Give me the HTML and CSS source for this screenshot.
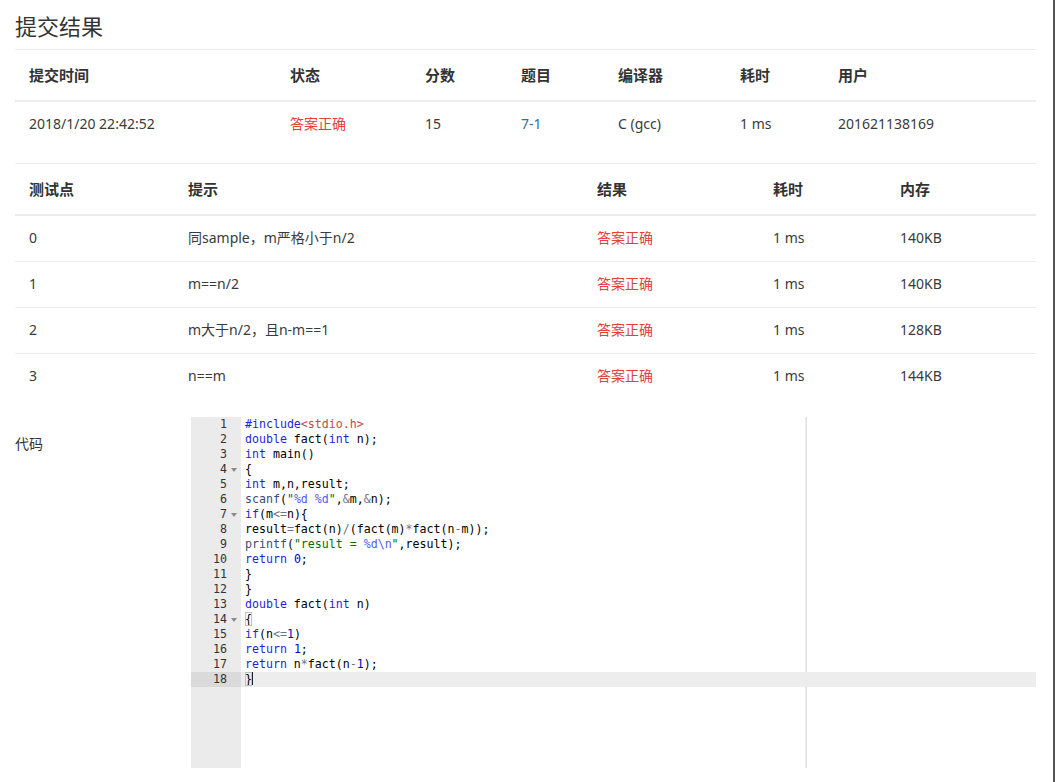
FILE: index.html
```html
<!DOCTYPE html>
<html lang="zh-CN">
<head>
<meta charset="utf-8">
<title>提交结果</title>
<link rel="stylesheet" href="styles.css">
</head>
<body>
<div class="page">
  <h1 class="title">提交结果</h1>

  <table class="tbl tbl-summary">
    <colgroup>
      <col class="c-time"><col class="c-status"><col class="c-score"><col class="c-prob"><col class="c-comp"><col class="c-cost"><col class="c-user">
    </colgroup>
    <thead>
      <tr><th>提交时间</th><th>状态</th><th>分数</th><th>题目</th><th>编译器</th><th>耗时</th><th>用户</th></tr>
    </thead>
    <tbody>
      <tr>
        <td>2018/1/20 22:42:52</td>
        <td class="ok">答案正确</td>
        <td>15</td>
        <td><a class="link" href="#">7-1</a></td>
        <td>C (gcc)</td>
        <td>1 ms</td>
        <td>201621138169</td>
      </tr>
    </tbody>
  </table>

  <table class="tbl tbl-cases">
    <colgroup>
      <col class="k-id"><col class="k-hint"><col class="k-res"><col class="k-time"><col class="k-mem">
    </colgroup>
    <thead>
      <tr><th>测试点</th><th>提示</th><th>结果</th><th>耗时</th><th>内存</th></tr>
    </thead>
    <tbody>
      <tr><td>0</td><td>同sample，m严格小于n/2</td><td class="ok">答案正确</td><td>1 ms</td><td>140KB</td></tr>
      <tr><td>1</td><td>m==n/2</td><td class="ok">答案正确</td><td>1 ms</td><td>140KB</td></tr>
      <tr><td>2</td><td>m大于n/2，且n-m==1</td><td class="ok">答案正确</td><td>1 ms</td><td>128KB</td></tr>
      <tr><td>3</td><td>n==m</td><td class="ok">答案正确</td><td>1 ms</td><td>144KB</td></tr>
    </tbody>
  </table>

  <div class="code-section">
    <div class="code-label">代码</div>
    <div class="editor">
      <div class="gutter">
        <div class="g-cell"><span class="num">1</span><span class="fold"></span></div>
        <div class="g-cell"><span class="num">2</span><span class="fold"></span></div>
        <div class="g-cell"><span class="num">3</span><span class="fold"></span></div>
        <div class="g-cell"><span class="num">4</span><span class="fold open"></span></div>
        <div class="g-cell"><span class="num">5</span><span class="fold"></span></div>
        <div class="g-cell"><span class="num">6</span><span class="fold"></span></div>
        <div class="g-cell"><span class="num">7</span><span class="fold open"></span></div>
        <div class="g-cell"><span class="num">8</span><span class="fold"></span></div>
        <div class="g-cell"><span class="num">9</span><span class="fold"></span></div>
        <div class="g-cell"><span class="num">10</span><span class="fold"></span></div>
        <div class="g-cell"><span class="num">11</span><span class="fold"></span></div>
        <div class="g-cell"><span class="num">12</span><span class="fold"></span></div>
        <div class="g-cell"><span class="num">13</span><span class="fold"></span></div>
        <div class="g-cell"><span class="num">14</span><span class="fold open"></span></div>
        <div class="g-cell"><span class="num">15</span><span class="fold"></span></div>
        <div class="g-cell"><span class="num">16</span><span class="fold"></span></div>
        <div class="g-cell"><span class="num">17</span><span class="fold"></span></div>
        <div class="g-cell active"><span class="num">18</span><span class="fold"></span></div>
      </div>
      <div class="code">
        <div class="print-margin"></div>
        <div class="ln"><span class="kw">#include</span><span class="inc">&lt;stdio.h&gt;</span></div>
        <div class="ln"><span class="kw">double</span> fact(<span class="kw">int</span> n);</div>
        <div class="ln"><span class="kw">int</span> main()</div>
        <div class="ln">{</div>
        <div class="ln"><span class="kw">int</span> m,n,result;</div>
        <div class="ln"><span class="fn">scanf</span>(<span class="str">"</span><span class="esc">%d</span><span class="str"> </span><span class="esc">%d</span><span class="str">"</span>,<span class="op">&amp;</span>m,<span class="op">&amp;</span>n);</div>
        <div class="ln"><span class="kw">if</span>(m<span class="op">&lt;=</span>n){</div>
        <div class="ln">result<span class="op">=</span>fact(n)<span class="op">/</span>(fact(m)<span class="op">*</span>fact(n<span class="op">-</span>m));</div>
        <div class="ln"><span class="fn">printf</span>(<span class="str">"result = </span><span class="esc">%d\n</span><span class="str">"</span>,result);</div>
        <div class="ln"><span class="kw">return</span> <span class="nm">0</span>;</div>
        <div class="ln">}</div>
        <div class="ln">}</div>
        <div class="ln"><span class="kw">double</span> fact(<span class="kw">int</span> n)</div>
        <div class="ln"><span class="brk">{</span></div>
        <div class="ln"><span class="kw">if</span>(n<span class="op">&lt;=</span><span class="nm">1</span>)</div>
        <div class="ln"><span class="kw">return</span> <span class="nm">1</span>;</div>
        <div class="ln"><span class="kw">return</span> n<span class="op">*</span>fact(n<span class="op">-</span><span class="nm">1</span>);</div>
        <div class="ln active"><span class="brk">}</span><span class="cursor"></span></div>
      </div>
    </div>
  </div>
</div>
</body>
</html>
```
FILE: styles.css
```css
* { box-sizing: border-box; }

html, body {
  margin: 0;
  padding: 0;
  background: #fff;
}

body {
  font-family: "Noto Sans", "Noto Sans CJK SC", sans-serif;
  font-size: 14px;
  color: #333;
}

.page {
  width: 1055px;
  min-height: 782px;
  padding: 0 17px 0 15px;
  border-right: 2px solid #555;
  overflow: hidden;
}

.title {
  margin: 11px 0 8px;
  font-size: 22px;
  line-height: 30px;
  font-weight: 400;
  color: #333;
}

.tbl {
  width: 100%;
  border-collapse: collapse;
  table-layout: fixed;
  border-top: 1px solid #ececec;
}

.tbl th {
  text-align: left;
  font-size: 15px;
  font-weight: 700;
  line-height: 20px;
  padding: 15px 8px 15px 14px;
  color: #333;
  border-bottom: 2px solid #ececec;
  white-space: nowrap;
}

.tbl td {
  text-align: left;
  font-size: 14px;
  line-height: 20px;
  color: #3a3a3a;
  white-space: nowrap;
}

.tbl-summary td {
  padding: 12px 8px 14px 14px;
}

.tbl-summary {
  margin-bottom: 15px;
}

.c-time { width: 261px; }
.c-status { width: 135px; }
.c-score { width: 96px; }
.c-prob { width: 97px; }
.c-comp { width: 122px; }
.c-cost { width: 98px; }

.tbl-cases td {
  padding: 12px 8px 13px 14px;
}

.tbl-cases tbody tr + tr td {
  border-top: 1px solid #ececec;
}

.k-id { width: 159px; }
.k-hint { width: 409px; }
.k-res { width: 176px; }
.k-time { width: 127px; }

.ok { color: #e2413b; }
.tbl td.ok { color: #e2413b; }

.link {
  color: #2f6eb0;
  text-decoration: none;
}

.code-section {
  display: flex;
  margin-top: 18px;
}

.code-label {
  width: 176px;
  flex: none;
  padding-top: 17px;
  font-size: 14px;
  line-height: 20px;
  color: #333;
}

.editor {
  flex: 1;
  display: flex;
  height: 351px;
  font-family: "DejaVu Sans Mono", "Liberation Mono", monospace;
  font-size: 11.6px;
  line-height: 15px;
  color: #000;
}

.gutter {
  width: 50px;
  flex: none;
  background: #ebebeb;
  color: #333;
}

.g-cell {
  display: flex;
  justify-content: flex-end;
  align-items: center;
  height: 15px;
}

.g-cell.active {
  background: #dadada;
}

.num {
  text-align: right;
}

.fold {
  width: 14px;
  height: 15px;
  position: relative;
}

.fold.open::after {
  content: "";
  position: absolute;
  left: 4px;
  top: 6px;
  border-left: 3px solid transparent;
  border-right: 3px solid transparent;
  border-top: 4px solid #8a8a8a;
}

.code {
  flex: 1;
  position: relative;
}

.print-margin {
  position: absolute;
  top: 0;
  bottom: 0;
  left: 564px;
  width: 2px;
  border-left: 1px solid #ececec;
  border-right: 1px solid #e2e2e2;
}

.ln {
  position: relative;
  height: 15px;
  padding-left: 4px;
  white-space: pre;
}

.ln.active {
  background: #ededed;
}

.kw { color: #1f1fe0; }
.inc { color: #c44a4a; }
.fn { color: #3c4c72; }
.str { color: #036a07; }
.esc { color: #585cf6; }
.nm { color: #0000cd; }
.op { color: #687687; }

.brk {
  outline: 1px solid #c0c0c0;
  outline-offset: -1px;
}

.cursor {
  display: inline-block;
  width: 1px;
  height: 13px;
  vertical-align: -2px;
  background: #222;
}
```
